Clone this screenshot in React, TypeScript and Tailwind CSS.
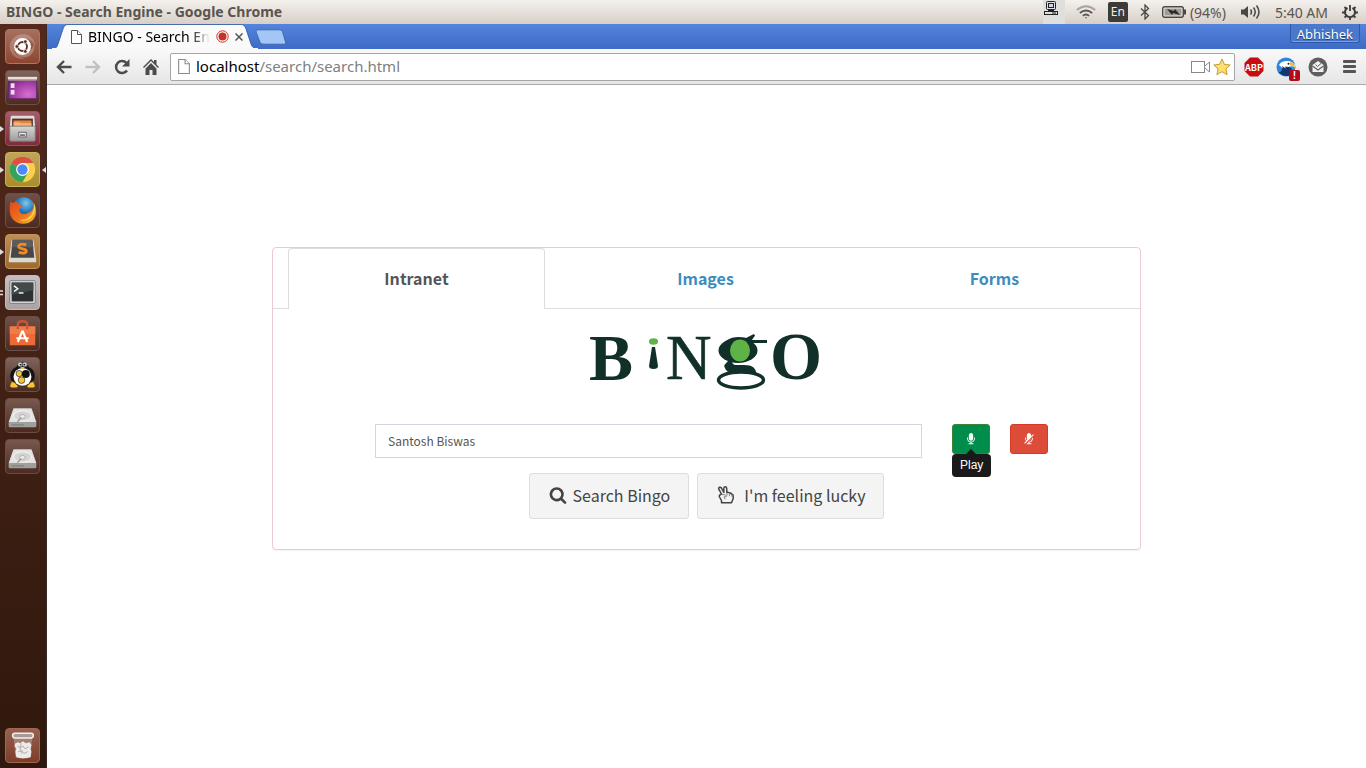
import { useState, type ReactNode } from "react";

const TILE_BASE = "flex size-[35px] items-center justify-center rounded-[4px] border";

function UbuntuIcon() {
  return (
    <svg viewBox="0 0 35 35" className="size-[35px]">
      <path d="M4 16C6 7 14 3 22 5c6 2 9 7 9 12-3-6-8-9-14-8C11 10 7 15 9 22c1 5 6 8 12 8-9 3-18-4-17-14z" fill="#fff" opacity=".22" />
      <path d="M30 15c1 8-4 14-11 14-4 0-7-2-9-5 7 3 17 0 20-9z" fill="#fff" opacity=".25" />
      <circle cx="17.500" cy="17.500" r="9" fill="#fff" />
      <circle cx="17.500" cy="17.500" r="4.800" fill="none" stroke="#5b2f22" strokeWidth="2" />
      <g fill="#5b2f22" stroke="#fff" strokeWidth=".8">
        <circle cx="11.500" cy="17.500" r="2" />
        <circle cx="20.500" cy="12.300" r="2" />
        <circle cx="20.500" cy="22.700" r="2" />
      </g>
    </svg>
  );
}

function PhotosIcon() {
  return (
    <svg viewBox="0 0 35 35" className="size-[35px]">
      <defs>
        <radialGradient id="violet" cx=".7" cy=".8" r=".9">
          <stop offset="0" stopColor="#d76fd0" />
          <stop offset=".6" stopColor="#a23ba5" />
          <stop offset="1" stopColor="#6a2272" />
        </radialGradient>
      </defs>
      <rect x="2.500" y="6.500" width="30" height="23" rx="1" fill="url(#violet)" stroke="#5d2563" />
      <rect x="2" y="6" width="31" height="4" rx="1" fill="#e9e4cf" />
      <rect x="2" y="9" width="31" height="1" fill="#7b745f" />
      <rect x="5" y="13" width="4" height="5" fill="#f3dff3" />
      <rect x="5" y="20" width="4" height="5" fill="#f3dff3" />
    </svg>
  );
}

function FilesIcon() {
  return (
    <svg viewBox="0 0 35 35" className="size-[35px]">
      <defs>
        <linearGradient id="steel" x1="0" y1="0" x2="0" y2="1">
          <stop offset="0" stopColor="#d6d6d4" />
          <stop offset="1" stopColor="#9b9b99" />
        </linearGradient>
      </defs>
      <path d="M5 5q0-1 1-1h23q1 0 1 1l1 12H4z" fill="#deded9" />
      <rect x="6.500" y="7" width="22" height="10" fill="#543126" />
      <path d="M8 9h19v8H8z" fill="#e8853c" />
      <path d="M8 11h6l1 1h12v6H8z" fill="#f5b27c" />
      <rect x="4" y="15" width="27" height="16" rx="1.500" fill="url(#steel)" stroke="#7b7b79" />
      <rect x="13.500" y="21.500" width="8" height="5" fill="#e5e5e3" stroke="#666" />
      <path d="M15 24.500h5" stroke="#555" strokeWidth="1.500" />
    </svg>
  );
}

function ChromeIcon() {
  return (
    <svg viewBox="0 0 35 35" className="size-[35px]">
      <circle cx="17.500" cy="17.500" r="13.500" fill="#f9cf4c" />
      <path d="M17.500 17.500 5.800 10.700A13.500 13.500 0 0 1 29.200 10.700H17.500z" fill="#dc4f42" />
      <path d="M5.800 10.700A13.500 13.500 0 0 0 17.500 31l5.900-10.200-5.900-3.300z" fill="#35a35a" />
      <circle cx="17.500" cy="17.500" r="6.800" fill="#fff" />
      <circle cx="17.500" cy="17.500" r="5.500" fill="#4c8bf5" />
    </svg>
  );
}

function FirefoxIcon() {
  return (
    <svg viewBox="0 0 35 35" className="size-[35px]">
      <defs>
        <radialGradient id="globe" cx=".6" cy=".25" r=".8">
          <stop offset="0" stopColor="#7cc9ee" />
          <stop offset=".5" stopColor="#1f6fb5" />
          <stop offset="1" stopColor="#12336f" />
        </radialGradient>
        <linearGradient id="fox" x1="0" y1="0" x2="1" y2="1">
          <stop offset="0" stopColor="#e0491d" />
          <stop offset=".6" stopColor="#f0741e" />
          <stop offset="1" stopColor="#fbc530" />
        </linearGradient>
      </defs>
      <circle cx="18.500" cy="16" r="12.500" fill="url(#globe)" />
      <path d="M5 8c1 1 2 1.500 3 1.500 2-2 4-2 4-2-1 2 0 3 2 4 2 0 4 0 4 1-1 2-4 2-4 4 0 4 4 6 9 4 4-2 6-4 6-8-1-3-2-4-3-5 4 2 6 6 6 11 0 8-6 13-14 13S4 25.500 4 17.500c0-4 0-6 1-9.500z" fill="url(#fox)" />
      <path d="M30 10c2 5 1 12-4 16-4 3-9 3-12 1 9 2 16-5 16-17z" fill="#fbd44a" />
    </svg>
  );
}

function SublimeIcon() {
  return (
    <svg viewBox="0 0 35 35" className="size-[35px]">
      <path d="M6 5h23l3 21v3H3v-3z" fill="#d9d9d6" />
      <path d="M7 5h21l2 19H5z" fill="#474747" />
      <path d="M7 5h21l1 8H6z" fill="#5c5c5c" />
      <path d="M21.500 10.500c-4-1.500-8-1-8 1.800 0 3.200 8 1.700 8 4.700 0 2.500-4 2.800-8 1.300" fill="none" stroke="#f58a1f" strokeWidth="2.900" />
    </svg>
  );
}

function TerminalIcon() {
  return (
    <svg viewBox="0 0 35 35" className="size-[35px]">
      <rect x="4" y="5" width="27" height="24" rx="1" fill="#e4e4e4" stroke="#777" />
      <rect x="6" y="7" width="23" height="20" fill="#2c3233" />
      <path d="M6 7h23v8L6 20z" fill="#434a4b" />
      <path d="M8.500 10.500l4 3-4 3" fill="none" stroke="#fff" strokeWidth="1.500" />
      <path d="M13.500 18h5" stroke="#fff" strokeWidth="1.500" />
    </svg>
  );
}

function SoftwareIcon() {
  return (
    <svg viewBox="0 0 35 35" className="size-[35px]">
      <path d="M12.500 13V8q0-3.500 5-3.500t5 3.500v5" fill="none" stroke="#c9533a" strokeWidth="2.500" />
      <path d="M4 10h27v20H4z" fill="#ee6a34" />
      <path d="M4 10h27v8H4z" fill="#f07c4b" />
      <path d="M12.500 10v3M22.500 10v3" stroke="#c9533a" strokeWidth="2.500" />
      <path d="M17.500 14.500l-5 12M17.500 14.500l5 12M11 22.500h13" fill="none" stroke="#fff" strokeWidth="2.300" />
    </svg>
  );
}

function PenguinIcon() {
  return (
    <svg viewBox="0 0 35 35" className="size-[35px]">
      <ellipse cx="17.500" cy="19" rx="13" ry="11" fill="#141414" />
      <path d="M11 12q0-8 6.500-8t6.500 8z" fill="#141414" />
      <ellipse cx="17.500" cy="20" rx="9.500" ry="9.500" fill="#fff" />
      <circle cx="15" cy="6.800" r="2.600" fill="#ddd" stroke="#555" />
      <circle cx="20" cy="6.800" r="2.600" fill="#ddd" stroke="#555" />
      <circle cx="15.500" cy="7" r="1" fill="#111" />
      <circle cx="19.500" cy="7" r="1" fill="#111" />
      <path d="M15 9.500h5L17.500 12z" fill="#f6b51e" />
      <circle cx="14" cy="16.500" r="3.300" fill="#f6c13a" stroke="#222" strokeWidth=".7" />
      <circle cx="21" cy="17" r="4.200" fill="#111" />
      <circle cx="16.500" cy="23.500" r="3.500" fill="#f6c13a" stroke="#222" strokeWidth=".7" />
      <path d="M4 30l2-5 3 1 4 4-2 1.500H6zM31 30l-2-5-3 1-4 4 2 1.500h5z" fill="#f9c534" stroke="#7a5310" strokeWidth=".6" />
    </svg>
  );
}

function DiskIcon() {
  return (
    <svg viewBox="0 0 35 35" className="size-[35px]">
      <path d="M8 10h19l5 14v5H3v-5z" fill="#bdbdbb" />
      <path d="M8 10h19l5 14.500H3z" fill="#e2e2e0" />
      <path d="M3 24.500h29V29q0 1-1 1H4q-1 0-1-1z" fill="#9f9f9d" />
      <ellipse cx="17.500" cy="18" rx="9.500" ry="5.500" fill="#d4d4d2" stroke="#f6f6f6" />
      <ellipse cx="17.500" cy="18.500" rx="3" ry="2" fill="#eee" stroke="#aaa" />
      <path d="M12 24l4-4" stroke="#999" strokeWidth="1.500" />
      <path d="M6 27.500h13" stroke="#777" strokeWidth="1" />
    </svg>
  );
}

function TrashIcon() {
  return (
    <svg viewBox="0 0 35 35" className="size-[35px]">
      <path d="M8 8h20l-2 22q-8 3-16 0z" fill="#d8d0cc" opacity=".35" />
      <path d="M10 15l3-1 2 1 3-2 3 2 4-1 2 3-1 4 1 3-1 6q-8 2-15 0l-1-6 1-3-2-3z" fill="#ecebe9" />
      <path d="M12 18l3 2 3-2 2 3 4-2M13 24l4-1 2 3 4-2M16 15l-1 6 2 5" stroke="#b0aba8" fill="none" />
      <rect x="7" y="4.500" width="22" height="5" rx="2.500" fill="#a89b96" stroke="#f1efee" strokeWidth="1.600" />
    </svg>
  );
}

type LauncherItem = { name: string; tile: string; icon: ReactNode; running?: "one" | "two"; focused?: boolean };

const launcher: LauncherItem[] = [
  { name: "Dash", tile: "border-[#b07463] bg-linear-to-b from-[#a5705f] to-[#8d4630]", icon: <UbuntuIcon /> },
  { name: "Photos", tile: "border-[#6e4f45] bg-linear-to-b from-[#80655c] to-[#4c2c22]", icon: <PhotosIcon /> },
  { name: "Files", tile: "border-[#9c4f5c] bg-linear-to-b from-[#a25e69] to-[#812a3c]", icon: <FilesIcon />, running: "one" },
  { name: "Chrome", tile: "border-[#c8b157] bg-linear-to-b from-[#bda55b] to-[#ab8d2b]", icon: <ChromeIcon />, running: "one", focused: true },
  { name: "Firefox", tile: "border-[#6e4f45] bg-linear-to-b from-[#6f5147] to-[#4c2c22]", icon: <FirefoxIcon /> },
  { name: "Sublime Text", tile: "border-[#c1925a] bg-linear-to-b from-[#bd8e58] to-[#a06a2b]", icon: <SublimeIcon />, running: "one" },
  { name: "Terminal", tile: "border-[#c3bbba] bg-linear-to-b from-[#c6bfc0] to-[#aaa2a3]", icon: <TerminalIcon />, running: "two" },
  { name: "Software Center", tile: "border-[#6e4f45] bg-linear-to-b from-[#6f5147] to-[#4c2c22]", icon: <SoftwareIcon /> },
  { name: "Penguin Game", tile: "border-[#6e4f45] bg-linear-to-b from-[#80655c] to-[#4c2c22]", icon: <PenguinIcon /> },
  { name: "Disk 1", tile: "border-[#6a4c42] bg-linear-to-b from-[#78594f] to-[#4c2c22]", icon: <DiskIcon /> },
  { name: "Disk 2", tile: "border-[#6a4c42] bg-linear-to-b from-[#78594f] to-[#4c2c22]", icon: <DiskIcon /> },
];

function Launcher() {
  return (
    <aside className="flex w-[47px] shrink-0 flex-col justify-between border-r border-[#3a2a26] bg-linear-to-b from-[#54291c] to-[#2f180d] py-[5px]">
      <ul className="flex flex-col gap-[6px]">
        {launcher.map((item) => (
          <li key={item.name} className="relative flex pl-[5px]">
            {item.running && (
              <svg viewBox="0 0 4 6" className="absolute top-[15px] left-0 h-[6px] w-1">
                {item.running === "one" ? <path d="M0 0l4 3-4 3z" fill="#ddd" /> : <path d="M0 1h3M0 4.500h3" stroke="#ddd" strokeWidth="1.500" />}
              </svg>
            )}
            <button type="button" aria-label={item.name} className={`${TILE_BASE} ${item.tile}`}>
              {item.icon}
            </button>
            {item.focused && (
              <svg viewBox="0 0 4 6" className="absolute top-[15px] right-0 h-[6px] w-1">
                <path d="M4 0L0 3l4 3z" fill="#ddd" />
              </svg>
            )}
          </li>
        ))}
      </ul>
      <div className="flex pl-[5px]">
        <button type="button" aria-label="Trash" className={`${TILE_BASE} border-[#a06553] bg-linear-to-b from-[#96604f] to-[#7e3d29]`}>
          <TrashIcon />
        </button>
      </div>
    </aside>
  );
}

function SystemBar() {
  return (
    <header className="flex h-6 shrink-0 items-center bg-linear-to-b from-[#f4f1ed] to-[#d8cfc7] pr-2 pl-[6px] font-['Noto_Sans',sans-serif] text-[#5a554f]">
      <h1 className="flex-1 text-[14px] leading-6 font-bold">BINGO - Search Engine - Google Chrome</h1>
      <div className="flex h-6 items-center text-[14px]">
        <div className="flex h-6 w-[22px] items-start bg-[#e0dfde] pt-px pl-px">
          <svg viewBox="0 0 14 14" className="size-[14px]" fill="none" stroke="#222">
            <rect x="2.500" y=".5" width="9" height="8" rx="1" />
            <rect x="4.500" y="2.500" width="5" height="4" fill="#c5d8f3" />
            <path d="M4 9.500h6" />
            <rect x=".5" y="10.500" width="13" height="3" />
            <path d="M8 12h4" />
          </svg>
        </div>
        <svg viewBox="0 0 20 14" className="ml-[11px] h-[14px] w-5" fill="none" stroke="#5a554f" strokeWidth="1.700">
          <path d="M.8 5q9.200-7.500 18.400 0" stroke="#aaa39c" />
          <path d="M3.800 8q6.200-5 12.400 0" />
          <path d="M6.800 10.800q3.200-2.600 6.400 0" />
          <circle cx="10" cy="12.700" r=".8" fill="#5a554f" stroke="none" />
        </svg>
        <span className="ml-3 flex h-5 w-5 items-center justify-center rounded-[2px] bg-[#3c3b37] text-[12px] text-[#f1ede8]">En</span>
        <svg viewBox="0 0 10 16" className="ml-3 h-4 w-[10px]" fill="none" stroke="#4a4641" strokeWidth="1.300">
          <path d="M1 4.500l7.500 7L5 15V1l3.500 3.500L1 11.500" />
        </svg>
        <svg viewBox="0 0 24 12" className="ml-3 h-3 w-6">
          <rect x=".7" y=".7" width="20.600" height="10.600" rx="2" fill="#ece8e3" stroke="#4a4641" strokeWidth="1.400" />
          <rect x="2.500" y="2.500" width="17" height="7" fill="#a09b95" />
          <rect x="22" y="3.500" width="2" height="5" fill="#4a4641" />
          <path d="M5 3l7 2 1-2 5 6-7-2-1 2z" fill="#2b2926" />
        </svg>
        <span className="ml-1">(94%)</span>
        <svg viewBox="0 0 20 16" className="ml-[15px] h-4 w-5" fill="none" stroke="#4a4641" strokeWidth="1.500">
          <path d="M0 5.500h3L7 2v12l-4-3.500H0z" fill="#4a4641" stroke="none" />
          <path d="M9.500 5.500q2 2.500 0 5M12.500 3.500q3.500 4.500 0 9M15.500 1.500q5 6.500 0 13" />
        </svg>
        <time className="ml-[14px]">5:40 AM</time>
        <svg viewBox="0 0 16 16" className="ml-[14px] size-4" fill="none" stroke="#3f3b37">
          <path d="M5.500 3.800a5 5 0 1 0 5 0" strokeWidth="2" />
          <path d="M8 1v6M0 8.500h3M13 8.500h3M2.500 13.500L4.500 12M13.500 13.500L11.500 12M8 13v3M2.500 3l2 2M13.500 3l-2 2" strokeWidth="1.800" />
        </svg>
      </div>
    </header>
  );
}

function PageGlyph({ className, stroke }: { className: string; stroke: string }) {
  return (
    <svg viewBox="0 0 11 14" className={className} fill="#fff" stroke={stroke}>
      <path d="M.5.5h6l4 4v9H.5z" />
      <path d="M6.500.5v4h4" />
    </svg>
  );
}

function TabStrip() {
  return (
    <div className="flex h-[25px] items-start bg-linear-to-b from-[#5484db] to-[#3d6bc6] pl-[5px] font-['Noto_Sans',sans-serif]">
      <div className="relative flex h-[25px] w-[206px] items-center pl-[19px]">
        <svg viewBox="0 0 206 25" className="absolute inset-0 h-[25px] w-[206px]">
          <path d="M0 25c4 0 5-2 6-5L11 5C12 2 13 .5 16 .5h173c3 0 4 1.500 5 4.500l5 15c1 3 3 5 7 5z" fill="#fafafa" stroke="#2f5597" strokeWidth=".8" />
          <rect x="0" y="24" width="206" height="1" fill="#f8f8f8" />
        </svg>
        <PageGlyph className="relative h-[14px] w-[11px]" stroke="#555" />
        <span className="relative ml-[6px] w-[122px] bg-linear-to-r from-black from-84% to-transparent to-100% bg-clip-text text-[14px] whitespace-nowrap text-transparent">
          BINGO - Search En
        </span>
        <svg viewBox="0 0 13 13" className="relative ml-[6px] size-[13px]">
          <circle cx="6.500" cy="6.500" r="5.700" fill="#fff" stroke="#c63226" />
          <circle cx="6.500" cy="6.500" r="4" fill="#c63226" />
        </svg>
        <button type="button" aria-label="Close tab" className="relative ml-[6px]">
          <svg viewBox="0 0 8 8" className="size-2" stroke="#555" strokeWidth="1.500">
            <path d="M.5.5l7 7M7.500.5l-7 7" />
          </svg>
        </button>
      </div>
      <button type="button" aria-label="New tab" className="-ml-[3px] mt-[5px]">
        <svg viewBox="0 0 32 16" className="h-4 w-8">
          <path d="M3 .8h22q2 0 2.600 2l3 10.500q.6 1.900-1.400 1.900H8q-2 0-3-2L1 3Q.5.8 3 .8z" fill="#a3c6f7" stroke="#3d68b3" />
        </svg>
      </button>
      <button type="button" className="mr-[6px] ml-auto h-[19px] rounded-b-[3px] border border-t-0 border-[#2f5aa8] bg-[#4a78cd] px-[6px] text-[13px] leading-[21px] text-white shadow-[inset_0_-1px_0_#7ba0e2] text-shadow-[0_1px_1px_#1d335f]">
        Abhishek
      </button>
    </div>
  );
}

function Toolbar() {
  return (
    <div className="flex h-9 items-center border-b border-[#a9a9a9] bg-linear-to-b from-[#f9f9f9] to-[#e6e6e6] pr-[10px] pl-[9px]">
      <button type="button" aria-label="Back">
        <svg viewBox="0 0 16 14" className="h-[14px] w-4" fill="none" stroke="#4c4c4c" strokeWidth="2.400">
          <path d="M8 1L2 7l6 6M2 7h13.500" />
        </svg>
      </button>
      <button type="button" aria-label="Forward" className="ml-[13px]">
        <svg viewBox="0 0 16 14" className="h-[14px] w-4" fill="none" stroke="#c1c1c1" strokeWidth="2.400">
          <path d="M8 1l6 6-6 6M14 7H.5" />
        </svg>
      </button>
      <button type="button" aria-label="Reload" className="ml-[13px]">
        <svg viewBox="0 0 16 16" className="size-4">
          <path d="M13 11.500A6 6 0 1 1 12.500 4" fill="none" stroke="#4c4c4c" strokeWidth="2.500" />
          <path d="M15.500 0v7.500H8z" fill="#4c4c4c" />
        </svg>
      </button>
      <button type="button" aria-label="Home" className="ml-[13px]">
        <svg viewBox="0 0 16 16" className="size-4" fill="#4c4c4c">
          <path d="M8 0l3 3V1h2.500v4.500L16 8l-1 1-7-7-7 7-1-1z" />
          <path d="M8 4l5.500 5.500V16h-4v-5h-3v5h-4V9.500z" />
        </svg>
      </button>
      <div className="ml-[11px] flex h-7 flex-1 items-center rounded-[2px] border border-[#a6a6a6] bg-white pr-[3px] pl-[7px]">
        <PageGlyph className="h-[15px] w-3" stroke="#8b8b8b" />
        <a href="#address" className="ml-[6px] flex-1 pb-[2px] font-['Noto_Sans',sans-serif] text-[15px] leading-6 text-[#808080]">
          <span className="text-black">localhost</span>/search/search.html
        </a>
        <svg viewBox="0 0 19 12" className="h-3 w-[19px]" fill="#fff" stroke="#888">
          <rect x=".5" y=".5" width="13" height="11" />
          <path d="M13.500 5.500l5-4.500v10l-5-4.500z" />
        </svg>
        <svg viewBox="0 0 18 18" className="ml-[3px] size-[18px]">
          <path d="M9 1l2.400 5.300 5.800.7-4.300 3.900 1.200 5.700L9 13.700l-5.100 2.900 1.200-5.700L.8 7l5.800-.7z" fill="#fbdf72" stroke="#c89a2c" strokeLinejoin="round" />
        </svg>
      </div>
      <button type="button" aria-label="Adblock Plus" className="ml-[9px]">
        <svg viewBox="0 0 20 20" className="size-5">
          <path d="M6 .5h8L19.500 6v8L14 19.500H6L.5 14V6z" fill="#c70d12" />
          <text x="10" y="13.500" textAnchor="middle" fontSize="9" fontWeight="700" fill="#fff" fontFamily="Noto Sans CJK SC, sans-serif">ABP</text>
        </svg>
      </button>
      <button type="button" aria-label="Eagle extension" className="relative ml-3">
        <svg viewBox="0 0 20 20" className="size-5">
          <circle cx="10" cy="10" r="9.500" fill="#2d86dc" />
          <path d="M6 9q6-1 9 2 2 3 1 7-8 3-14-3 5 1 4-6z" fill="#14366f" />
          <path d="M3 8q2-4 8-4 6 0 8.500 5l-1 1.500q-3-2-6-.5L9 9.500l1 2-4-2.500 1 2.500z" fill="#fff" />
          <path d="M14 5q5 0 5.200 7-1.700-4-5-3.500z" fill="#f3b532" />
          <circle cx="12.500" cy="6.800" r="1" fill="#222" />
        </svg>
        <span className="absolute -right-1 -bottom-1 flex h-[11px] w-[11px] items-center justify-center rounded-[2px] bg-[#b3091c] font-['Liberation_Sans',sans-serif] text-[10px] leading-[11px] font-bold text-white">!</span>
      </button>
      <button type="button" aria-label="Mail" className="ml-3">
        <svg viewBox="0 0 20 20" className="size-5">
          <circle cx="10" cy="10" r="9.500" fill="#5f5f5f" />
          <path d="M4.500 8L10 4l5.500 4v7h-11z" fill="#f1f1f1" />
          <path d="M4.500 9l5.500 4 5.500-4" fill="none" stroke="#5f5f5f" strokeWidth="1.200" />
          <path d="M7.500 7.500l2 2L13 6.500" fill="none" stroke="#5f5f5f" strokeWidth="1" />
        </svg>
      </button>
      <button type="button" aria-label="Menu" className="ml-[15px]">
        <svg viewBox="0 0 13 13" className="size-[13px]" fill="#555">
          <rect y="0" width="13" height="3" rx="1" />
          <rect y="5" width="13" height="3" rx="1" />
          <rect y="10" width="13" height="3" rx="1" />
        </svg>
      </button>
    </div>
  );
}

function BingoLogo() {
  return (
    <svg viewBox="0 0 240 56" className="h-14 w-60 overflow-visible" role="img" aria-label="BiNgO" fill="#12302a" fontFamily="Liberation Serif, serif">
      <text x="2" y="44" fontSize="66" fontWeight="700">B</text>
      <ellipse cx="66.500" cy="5.500" rx="4.500" ry="3.300" fill="#5fb246" />
      <path d="M65 11h3l3 19q0 3-4.500 3t-4.500-3z" />
      <text x="79" y="43" fontSize="63" stroke="#12302a" strokeWidth=".6">N</text>
      <text x="134" y="36" fontSize="72" fontWeight="700">g</text>
      <ellipse cx="154" cy="44" rx="22.500" ry="8" fill="#fff" stroke="#12302a" strokeWidth="3.500" />
      <ellipse cx="151" cy="14.500" rx="19.500" ry="12.500" />
      <ellipse cx="153" cy="14.500" rx="10" ry="11" fill="#5fb246" />
      <rect x="162" y="4" width="18" height="3" />
      <text x="183" y="43" fontSize="67" fontWeight="700">O</text>
    </svg>
  );
}

const MIC_PATH =
  "M1472 704v128q0 221-147.500 384.500t-364.500 187.500v132h256q26 0 45 19t19 45-19 45-45 19h-640q-26 0-45-19t-19-45 19-45 45-19h256v-132q-217-24-364.500-187.500t-147.500-384.500v-128q0-26 19-45t45-19 45 19 19 45v128q0 185 131.500 316.500t316.500 131.500 316.500-131.500 131.500-316.500v-128q0-26 19-45t45-19 45 19 19 45zm-256-384v512q0 132-94 226t-226 94-226-94-94-226v-512q0-132 94-226t226-94 226 94 94 226z";

function MicIcon() {
  return (
    <svg viewBox="0 0 1792 1792" className="size-3" fill="#fff">
      <path d={MIC_PATH} />
    </svg>
  );
}

function MicOffIcon() {
  return (
    <svg viewBox="0 0 1792 1792" className="size-3" fill="#fff">
      <path d={MIC_PATH} />
      <path d="M1640 330L330 1640" stroke="#dd4b39" strokeWidth="200" />
      <path d="M1560 230L230 1560" stroke="#fff" strokeWidth="150" />
    </svg>
  );
}

function SearchIcon() {
  return (
    <svg viewBox="0 0 1792 1792" className="size-[18px]" fill="#444">
      <path d="M1216 832q0-185-131.500-316.500t-316.500-131.500-316.500 131.500-131.500 316.500 131.500 316.500 316.500 131.500 316.500-131.500 131.500-316.500zm512 832q0 52-38 90t-90 38q-54 0-90-38l-343-342q-179 124-399 124-143 0-273.500-55.500t-225-150-150-225-55.500-273.500 55.500-273.500 150-225 225-150 273.500-55.500 273.500 55.500 225 150 150 225 55.500 273.500q0 220-124 399l343 343q37 37 37 90z" />
    </svg>
  );
}

function PeaceIcon() {
  return (
    <svg viewBox="0 0 18 18" className="size-[18px]" fill="none" stroke="#444" strokeWidth="1.500" strokeLinejoin="round" strokeLinecap="round">
      <path d="M4.500 16.800V14.500L2.500 11q-.6-1.200.3-2L4.500 8 1.800 3.200q-.5-1.400.7-1.900 1.200-.5 1.900.7L6.800 6.500V2.200Q7 .8 8.300.8t1.400 1.400L9.800 6.500q2-.8 2.700.8 1.800-.6 2.400 1 1.200 0 1.300 1.500v2.700l-1.700 4.300z" />
      <path d="M4.800 8.500l4 .5q1.200.6.400 1.800L7 10.800 8 13M9.800 6.800l.4 2M12.500 7.500v2.300M14.800 8.600v1.700" strokeWidth=".9" stroke="#777" />
    </svg>
  );
}

const tabs = ["Intranet", "Images", "Forms"];

function SearchCard() {
  const [active, setActive] = useState("Intranet");
  const [query, setQuery] = useState("Santosh Biswas");
  return (
    <section className="mx-auto w-full max-w-[869px] rounded-[4px] border border-[#eacbd1] bg-white font-['Noto_Sans_CJK_SC',sans-serif] shadow-[0_1px_1px_rgba(0,0,0,0.05)]">
      <div role="tablist" className="grid h-[61px] grid-cols-3 border-b border-[#ddd]">
        {tabs.map((tab) => (
          <div key={tab} className="-mb-px flex pr-[17px] pl-[15px]">
            <button
              type="button"
              role="tab"
              aria-selected={tab === active}
              onClick={() => setActive(tab)}
              className={`flex-1 rounded-t-[4px] pb-[2px] text-[16px] font-bold ${
                tab === active ? "border border-b-0 border-[#ddd] bg-white text-[#555]" : "border border-b-0 border-transparent text-[#3c8dbc]"
              }`}
            >
              {tab}
            </button>
          </div>
        ))}
      </div>
      <form className="pt-[27px] pb-[30px]" onSubmit={(e) => e.preventDefault()}>
        <div className="flex justify-center">
          <BingoLogo />
        </div>
        <div className="mt-8 flex items-start pr-[92px] pl-[102px]">
          <input
            type="text"
            aria-label="Search query"
            value={query}
            onChange={(e) => setQuery(e.target.value)}
            className="h-[34px] min-w-0 flex-1 border border-[#d2d6de] px-3 pb-[2px] text-[12px] text-[#555] outline-none"
          />
          <div className="relative ml-[30px]">
            <button type="button" aria-label="Play" aria-describedby="play-tip" className="flex h-[30px] w-[38px] items-center justify-center rounded-[3px] border border-[#398439] bg-[#008d4c]">
              <MicIcon />
            </button>
            <div id="play-tip" role="tooltip" className="absolute top-[30px] left-0 rounded-[4px] bg-[#1a1a1a] px-2 font-['Liberation_Sans',sans-serif] text-[12px] leading-[23px] text-white">
              Play
              <svg viewBox="0 0 10 5" className="absolute -top-[5px] left-[14px] h-[5px] w-[10px]">
                <path d="M0 5l5-5 5 5z" fill="#1a1a1a" />
              </svg>
            </div>
          </div>
          <button type="button" aria-label="Stop" className="ml-5 flex h-[30px] w-[38px] items-center justify-center rounded-[3px] border border-[#d73925] bg-[#dd4b39]">
            <MicOffIcon />
          </button>
        </div>
        <div className="mt-[15px] flex justify-center gap-2 text-[16px] text-[#444]">
          <button type="submit" className="flex h-[46px] items-center gap-[6px] rounded-[3px] border border-[#ddd] bg-[#f4f4f4] pr-[18px] pb-[2px] pl-[19px]">
            <SearchIcon />
            Search Bingo
          </button>
          <button type="button" className="flex h-[46px] items-center gap-[9px] rounded-[3px] border border-[#ddd] bg-[#f4f4f4] pr-[18px] pb-[2px] pl-[19px]">
            <PeaceIcon />
            I'm feeling lucky
          </button>
        </div>
      </form>
    </section>
  );
}

export default function App() {
  return (
    <div className="flex min-h-screen flex-col bg-white">
      <SystemBar />
      <div className="flex flex-1">
        <Launcher />
        <div className="flex min-w-0 flex-1 flex-col">
          <TabStrip />
          <Toolbar />
          <main className="flex-1 pt-[162px] pb-10">
            <SearchCard />
          </main>
        </div>
      </div>
    </div>
  );
}
